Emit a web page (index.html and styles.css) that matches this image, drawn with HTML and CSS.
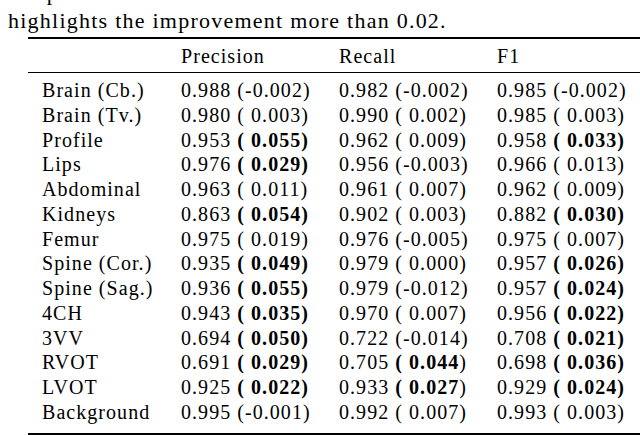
FILE: index.html
```html
<!DOCTYPE html>
<html>
<head>
<meta charset="utf-8">
<link rel="stylesheet" href="styles.css">
</head>
<body>
<div class="caption">
  <div class="cap-line cap-prev">The precision</div>
  <div class="cap-line">highlights the improvement more than 0.02.</div>
</div>
<table class="results">
  <colgroup>
    <col class="c-label"><col class="c-num"><col class="c-num"><col class="c-last">
  </colgroup>
  <thead>
    <tr><th></th><th>Precision</th><th>Recall</th><th>F1</th></tr>
  </thead>
  <tbody>
    <tr><td>Brain (Cb.)</td><td>0.988 (-0.002)</td><td>0.982 (-0.002)</td><td>0.985 (-0.002)</td></tr>
    <tr><td>Brain (Tv.)</td><td>0.980 ( 0.003)</td><td>0.990 ( 0.002)</td><td>0.985 ( 0.003)</td></tr>
    <tr><td>Profile</td><td>0.953 <b>( 0.055)</b></td><td>0.962 ( 0.009)</td><td>0.958 <b>( 0.033)</b></td></tr>
    <tr><td>Lips</td><td>0.976 <b>( 0.029)</b></td><td>0.956 (-0.003)</td><td>0.966 ( 0.013)</td></tr>
    <tr><td>Abdominal</td><td>0.963 ( 0.011)</td><td>0.961 ( 0.007)</td><td>0.962 ( 0.009)</td></tr>
    <tr><td>Kidneys</td><td>0.863 <b>( 0.054)</b></td><td>0.902 ( 0.003)</td><td>0.882 <b>( 0.030)</b></td></tr>
    <tr><td>Femur</td><td>0.975 ( 0.019)</td><td>0.976 (-0.005)</td><td>0.975 ( 0.007)</td></tr>
    <tr><td>Spine (Cor.)</td><td>0.935 <b>( 0.049)</b></td><td>0.979 ( 0.000)</td><td>0.957 <b>( 0.026)</b></td></tr>
    <tr><td>Spine (Sag.)</td><td>0.936 <b>( 0.055)</b></td><td>0.979 (-0.012)</td><td>0.957 <b>( 0.024)</b></td></tr>
    <tr><td>4CH</td><td>0.943 <b>( 0.035)</b></td><td>0.970 ( 0.007)</td><td>0.956 <b>( 0.022)</b></td></tr>
    <tr><td>3VV</td><td>0.694 <b>( 0.050)</b></td><td>0.722 (-0.014)</td><td>0.708 <b>( 0.021)</b></td></tr>
    <tr><td>RVOT</td><td>0.691 <b>( 0.029)</b></td><td>0.705 <b>( 0.044</b>)</td><td>0.698 <b>( 0.036)</b></td></tr>
    <tr><td>LVOT</td><td>0.925 <b>( 0.022)</b></td><td>0.933 <b>( 0.027</b>)</td><td>0.929 <b>( 0.024)</b></td></tr>
    <tr><td>Background</td><td>0.995 (-0.001)</td><td>0.992 ( 0.007)</td><td>0.993 ( 0.003)</td></tr>
  </tbody>
</table>
</body>
</html>
```

FILE: styles.css
```css
html, body {
  margin: 0;
  padding: 0;
  background: #fff;
  overflow: hidden;
}
body {
  width: 640px;
  height: 435px;
  color: #000;
  font-family: "Liberation Serif", "Times New Roman", serif;
}
.caption {
  margin-top: -21.4px;
  padding-left: 8px;
  font-size: 22px;
  line-height: 28px;
  letter-spacing: 1.24px;
  white-space: nowrap;
}
.cap-prev {
  margin-left: -6px;
}
.results {
  margin-top: 2.4px;
  margin-left: 28px;
  width: 612px;
  border-collapse: collapse;
  table-layout: fixed;
  font-size: 20px;
  line-height: 24.75px;
  letter-spacing: 1.05px;
  border-top: 2px solid #000;
  border-bottom: 2px solid #000;
}
.c-label { width: 153px; }
.c-num { width: 158px; }
.results th,
.results td {
  padding: 0;
  text-align: left;
  white-space: nowrap;
  font-weight: normal;
}
.results td:first-child {
  padding-left: 14px;
}
.results thead th {
  padding-top: 4.6px;
  padding-bottom: 3.7px;
  border-bottom: 1px solid #000;
}
.results tbody tr:first-child td {
  padding-top: 5px;
}
.results tbody tr:last-child td {
  padding-bottom: 8px;
}
.results b {
  font-weight: bold;
}
```
